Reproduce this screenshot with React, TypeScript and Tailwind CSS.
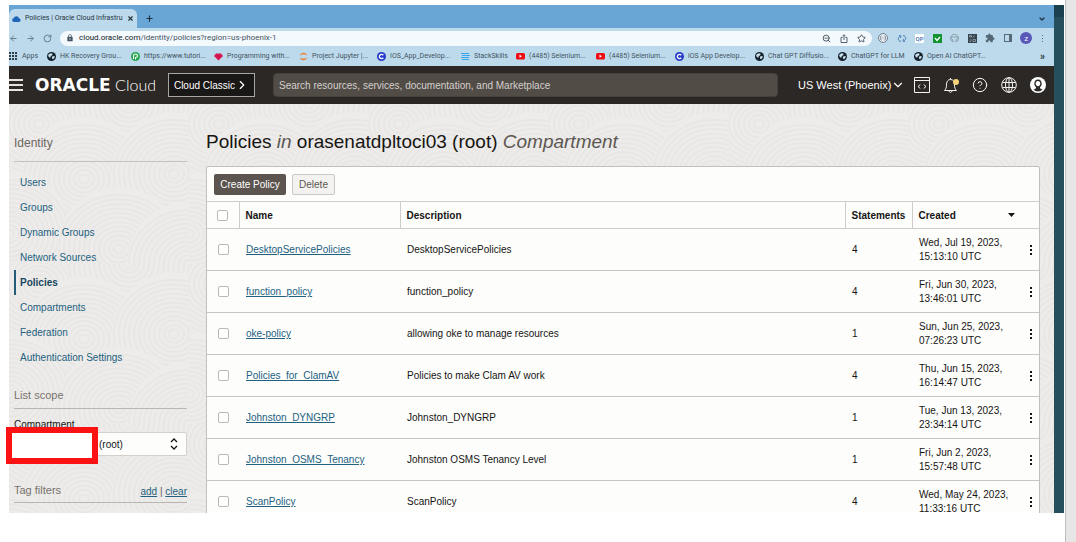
import type { ReactNode } from "react";
import {
  ArrowLeft,
  ArrowRight,
  ChevronDown,
  ChevronRight,
  CircleHelp,
  Globe,
  Plus,
  RotateCw,
  Star,
  X,
  ZoomOut,
} from "lucide-react";
import { MdExtension, MdLock } from "react-icons/md";

function Swirls() {
  const radii = [5, 10, 15, 20, 25, 30, 35, 40, 45, 50, 55, 60];
  const centers = [
    [30, 20], [120, 0], [75, 75], [165, 70], [0, 130], [110, 145], [180, 160],
  ];
  return (
    <svg aria-hidden="true" className="absolute inset-0 h-full w-full">
      <defs>
        <pattern id="swirls" width="180" height="160" patternUnits="userSpaceOnUse">
          {centers.map(([x, y], i) => (
            <g key={i} stroke="#e9e7e5" strokeWidth="2">
              <circle cx={x} cy={y} r="62" fill="#eeecea" stroke="none" />
              {radii.map((r) => (
                <ellipse key={r} cx={x} cy={y} rx={r} ry={r * 0.9} fill="none" />
              ))}
            </g>
          ))}
        </pattern>
      </defs>
      <rect width="100%" height="100%" fill="url(#swirls)" />
    </svg>
  );
}

const globe = (
  <svg viewBox="0 0 16 16" className="size-[9px]">
    <circle cx="8" cy="8" r="8" fill="#15202b" />
    <path d="M3 4l4-2 3 1-1 3-3 1 1 2-2 1-3-3zM9 8l4-1 1 2-3 4-2-1z" fill="#c9e1ef" />
  </svg>
);
const youtube = (
  <svg viewBox="0 0 18 13" className="w-[9px]">
    <rect width="18" height="13" rx="3" fill="#f00e14" />
    <path d="M7 3.5v6l5-3z" fill="#fff" />
  </svg>
);
const course = (
  <svg viewBox="0 0 18 18" className="size-[9px]">
    <circle cx="9" cy="9" r="9" fill="#263bc9" />
    <path d="M12.5 6.500a4.300 4.300 0 1 0 0 5" fill="none" stroke="#fff" strokeWidth="2.600" />
  </svg>
);

const bookmarks: { icon: ReactNode; label: string }[] = [
  {
    icon: (
      <svg viewBox="0 0 9 9" className="size-[9px]" fill="#2c3e4b">
        {[0, 3, 6].map((x) => [0, 3, 6].map((y) => <rect key={`${x}-${y}`} x={x} y={y} width="2" height="2" />))}
      </svg>
    ),
    label: "Apps",
  },
  { icon: globe, label: "HK Recovery Grou..." },
  {
    icon: (
      <svg viewBox="0 0 18 18" className="size-[9px]">
        <circle cx="9" cy="9" r="9" fill="#25a651" />
        <path d="M5 14V8a4 4 0 0 1 8 0c0 3-2 3-4 3" fill="none" stroke="#fff" strokeWidth="2.200" />
        <path d="M9 10v5" stroke="#fff" strokeWidth="2" />
      </svg>
    ),
    label: "https://www.tutori...",
  },
  {
    icon: (
      <svg viewBox="0 0 18 16" className="w-[9px]">
        <path d="M4 1h10l4 5-9 9L0 6z" fill="#d8174f" />
        <path d="M6 4l3 4 3-4" fill="none" stroke="#b00f3f" />
      </svg>
    ),
    label: "Programming with...",
  },
  {
    icon: (
      <svg viewBox="0 0 18 20" className="size-[9px]" fill="#ef7b2c">
        <path d="M1 8a8.300 8.300 0 0 1 16 0C12 4 6 4 1 8zM1 12a8.300 8.300 0 0 0 16 0c-5 4-11 4-16 0z" />
      </svg>
    ),
    label: "Project Jupyter |...",
  },
  { icon: course, label: "IOS_App_Develop..." },
  {
    icon: (
      <svg viewBox="0 0 9 8" className="h-2 w-[9px]" fill="#35a6ea">
        <path d="M0 0h8v1H0zM1 2h8v1H1zM0 4h8v1H0zM1 6h7v1H1z" />
      </svg>
    ),
    label: "StackSkills",
  },
  { icon: youtube, label: "(4485) Selenium..." },
  { icon: youtube, label: "(4485) Selenium..." },
  { icon: course, label: "iOS App Develop..." },
  { icon: globe, label: "Chat GPT Diffusio..." },
  { icon: globe, label: "ChatGPT for LLM" },
  { icon: globe, label: "Open AI ChatGPT..." },
];

function IconButton({ label, children }: { label: string; children: ReactNode }) {
  return (
    <button type="button" aria-label={label} className="flex shrink-0 items-center justify-center">
      {children}
    </button>
  );
}

function BrowserChrome() {
  return (
    <div className="font-['Roboto',sans-serif] text-[#44535f]">
      <div className="flex h-[23px] items-end bg-[#69a6d6]">
        <div className="flex h-[19px] w-32 items-center gap-1 rounded-t-md bg-[#bcdaec] pr-[5px] pl-[3px] text-[7px] text-[#26343f]">
          <svg viewBox="0 0 18 12" className="w-[9px] shrink-0" fill="#2064b8">
            <path d="M4 12a4 4 0 0 1-.5-7.900A5.500 5.500 0 0 1 14 4.500 3.800 3.800 0 0 1 14 12z" />
          </svg>
          <span className="flex-1 whitespace-nowrap">Policies | Oracle Cloud Infrastru</span>
          <IconButton label="Close tab"><X className="size-[7px]" strokeWidth={4} /></IconButton>
        </div>
        <div className="flex h-[19px] flex-1 items-center justify-between px-2 text-[#20323f]">
          <IconButton label="New tab"><Plus className="size-[9px]" strokeWidth={3} /></IconButton>
          <IconButton label="Search tabs"><ChevronDown className="size-2" strokeWidth={4} /></IconButton>
        </div>
      </div>
      <div className="flex h-5 items-center bg-[#bcdaec]">
        <div className="flex w-[51px] items-center gap-2 text-[#637986]">
          <IconButton label="Back"><ArrowLeft className="size-[9px]" strokeWidth={2.500} /></IconButton>
          <IconButton label="Forward"><ArrowRight className="size-[9px]" strokeWidth={2.500} /></IconButton>
          <IconButton label="Reload"><RotateCw className="size-[9px]" strokeWidth={2.500} /></IconButton>
        </div>
        <div className="flex h-[15px] flex-1 items-center rounded-full bg-[#f4f9fd] pr-[6px] pl-[6px]">
          <MdLock className="size-2 shrink-0" />
          <div className="ml-[5px] flex-1 text-[8px] whitespace-nowrap">
            <span className="text-[#111a20]">cloud.oracle.com</span>/identity/policies?region=us-phoenix-1
          </div>
          <div className="flex items-center gap-[9px]">
            <IconButton label="Zoom"><ZoomOut className="size-[9px]" strokeWidth={2.500} /></IconButton>
            <IconButton label="Share">
              <svg viewBox="0 0 16 18" className="h-[9px] w-2" fill="none" stroke="#44535f" strokeWidth="1.800">
                <path d="M5 7H2v10h12V7h-3M8 12V2M5 4.500L8 1.500l3 3" />
              </svg>
            </IconButton>
            <IconButton label="Bookmark"><Star className="size-[9px]" strokeWidth={2.500} /></IconButton>
          </div>
        </div>
        <div className="flex w-[182px] items-center justify-between pr-[10px] pl-[6px]">
          <IconButton label="Code extension">
            <svg viewBox="0 0 18 18" className="size-[10px]" fill="none" stroke="#52616d" strokeWidth="1.400">
              <circle cx="9" cy="9" r="8" fill="#e8eff3" />
              <path d="M6 5c-2 0 0 3-2 4 2 1 0 4 2 4M12 5c2 0 0 3 2 4-2 1 0 4-2 4M8 9h2" />
            </svg>
          </IconButton>
          <IconButton label="Sync extension">
            <svg viewBox="0 0 20 18" className="h-[9px] w-[10px]" fill="none" stroke="#4f80b4" strokeWidth="2">
              <path d="M8 15C1 14 1 6 7 4M4 3l4 1-1 4M12 3c7 1 7 9 1 11M16 15l-4-1 1-4" />
            </svg>
          </IconButton>
          <button type="button" className="flex size-[9px] items-center justify-center bg-white text-[6px] font-medium text-[#386cae]">QP</button>
          <IconButton label="Checker">
            <svg viewBox="0 0 18 18" className="size-[9px]">
              <rect width="18" height="18" fill="#13932f" />
              <path d="M4 8l4 5 6-7" fill="none" stroke="#fff" strokeWidth="2.500" />
            </svg>
          </IconButton>
          <IconButton label="Repository extension">
            <svg viewBox="0 0 18 18" className="size-[9px]" fill="none" stroke="#8c9daa" strokeWidth="2">
              <path d="M6 16a8 8 0 1 1 6 0v-4c4-1 3-5 2-7l-3 1H7L4 5c-1 2-2 6 2 7z" />
            </svg>
          </IconButton>
          <IconButton label="Picture extension">
            <svg viewBox="0 0 18 18" className="size-[9px]">
              <rect width="18" height="18" fill="#35444d" />
              <path d="M3 3h4v3H3zM9 7l5-4M3 12h5M3 15h3M10 11h5v4h-5z" fill="none" stroke="#afbcc2" strokeWidth="1.300" />
            </svg>
          </IconButton>
          <IconButton label="Extensions"><MdExtension className="size-[10px] text-[#536774]" /></IconButton>
          <IconButton label="Side panel">
            <svg viewBox="0 0 8 8" className="size-2" fill="#586a77">
              <path fillRule="evenodd" d="M0 0h8v8H0zM1 1v6h4V1z" />
            </svg>
          </IconButton>
          <button type="button" aria-label="Profile" className="flex size-3 items-center justify-center rounded-full bg-[#5957b8] text-[6px] text-white">Z</button>
          <IconButton label="Menu">
            <svg viewBox="0 0 3 9" className="h-[9px] w-[3px]" fill="#586a77">
              <rect x="1" y="1" width="1" height="1" /><rect x="1" y="4" width="1" height="1" /><rect x="1" y="7" width="1" height="1" />
            </svg>
          </IconButton>
        </div>
      </div>
      <nav aria-label="Bookmarks" className="grid h-[18px] grid-cols-[38px_84px_83px_85px_78px_84px_55px_80px_79px_80px_83px_76px_1fr_auto] items-center bg-[#bcdaec] pr-[9px] pb-px text-[7px]">
        {bookmarks.map(({ icon, label }, i) => (
          <a key={i} href="#" className="flex items-center gap-1 whitespace-nowrap">
            <span className="flex w-[9px] shrink-0 justify-center">{icon}</span>
            {label}
          </a>
        ))}
        <button type="button" aria-label="More bookmarks" className="text-[10px] leading-none font-bold text-[#26343f]">»</button>
      </nav>
    </div>
  );
}

function ConsoleHeader() {
  return (
    <header className="flex h-[38px] items-center bg-[#2c2825] text-white">
      <button type="button" aria-label="Open navigation" className="mr-3 flex w-[14px] flex-col gap-[3px]">
        <span className="h-[2px] bg-[#e5e2df]" />
        <span className="h-[2px] bg-[#e5e2df]" />
        <span className="h-[2px] bg-[#e5e2df]" />
      </button>
      <a href="#" className="mr-3 flex w-[121px] items-center justify-between whitespace-nowrap">
        <span className="font-['DejaVu_Sans',sans-serif] text-[17px] leading-5 font-bold">ORACLE</span>
        <span className="font-['Lato',sans-serif] text-[16px] leading-5 font-light">Cloud</span>
      </a>
      <button type="button" className="flex h-6 w-[87px] items-center justify-center border border-[#a9a5a1] bg-[#1a1816] text-[10px] whitespace-nowrap">
        Cloud Classic
        <ChevronRight className="size-[14px]" />
      </button>
      <input
        type="search"
        aria-label="Search"
        placeholder="Search resources, services, documentation, and Marketplace"
        className="ml-[18px] h-6 min-w-0 flex-1 rounded-sm border border-[#47413d] bg-[#524c47] px-[5px] text-[10px] placeholder:text-[#d3d0cd]"
      />
      <button type="button" className="ml-5 flex w-[103px] items-center text-[11px] whitespace-nowrap">
        US West (Phoenix)
        <ChevronDown className="size-[14px] shrink-0" />
      </button>
      <div className="ml-[13px] flex items-center gap-[13px] pr-2">
        <IconButton label="Developer tools">
          <svg viewBox="0 0 16 16" className="size-4" fill="none" stroke="#f5f3f1">
            <path d="M.5.5h15v15H.5zM.5 3.500h15M6.300 7.500L4 9.500l2.300 2M9.700 7.500l2.300 2-2.300 2" />
          </svg>
        </IconButton>
        <button type="button" aria-label="Announcements" className="relative">
          <svg viewBox="0 0 16 16" className="size-4" fill="none" stroke="#f5f3f1">
            <path d="M1.500 13.500h12c-1.500-1.500-2-3-2-5.500 0-3-1-5.500-4-5.500S3.500 5 3.500 8c0 2.500-.5 4-2 5.500zM7.500 2.500V1M6 13.500c0 2.500 3 2.500 3 0" />
          </svg>
          <span className="absolute top-[2px] right-0 size-[6px] rounded-full bg-[#f6d27a]" />
        </button>
        <IconButton label="Help"><CircleHelp className="size-4" strokeWidth={1.500} /></IconButton>
        <IconButton label="Language">
          <svg viewBox="0 0 16 16" className="size-4" fill="none" stroke="#f5f3f1">
            <circle cx="8" cy="8" r="7.300" />
            <ellipse cx="8" cy="8" rx="3.500" ry="7.300" />
            <path d="M8 .7v14.600M1.500 5.500h13M1.500 10.500h13" />
          </svg>
        </IconButton>
        <IconButton label="Account">
          <svg viewBox="0 0 16 16" className="size-4">
            <circle cx="8" cy="8" r="8" fill="#fff" />
            <path d="M8 2.500c-2.500 0-3.700 1.800-3.700 4 0 1.700.7 3 1.700 3.700v1.100l-2.500 1.400a6.700 6.700 0 0 0 9 0L10 11.300v-1.100c1-.7 1.700-2 1.700-3.700 0-2.200-1.200-4-3.700-4z" fill="#2c2825" />
            <path d="M8 4c-1.500 0-2.300 1.100-2.300 2.500S6.700 9.300 8 9.300s2.300-1.400 2.300-2.800S9.500 4 8 4z" fill="#fff" />
          </svg>
        </IconButton>
      </div>
    </header>
  );
}

const sections = ["Users", "Groups", "Dynamic Groups", "Network Sources", "Policies", "Compartments", "Federation", "Authentication Settings"];

function Sidebar() {
  return (
    <aside className="relative w-[178px] shrink-0 pl-[5px]">
      <h2 className="mt-[30px] border-b border-[#c5c1bd] pb-[9px] text-[12px] leading-[18px] text-[#6c6761]">Identity</h2>
      <nav aria-label="Identity" className="mt-2 flex flex-col">
        {sections.map((name) => (
          <a
            key={name}
            href="#"
            className={
              name === "Policies"
                ? "flex h-[25px] items-center border-l-2 border-[#235b78] pl-1 text-[10px] font-bold text-[#17465f]"
                : "flex h-[25px] items-center pl-[6px] text-[10px] text-[#22617f]"
            }
          >
            {name}
          </a>
        ))}
      </nav>
      <h2 className="mt-4 border-b border-[#b9b5b1] pb-1 text-[11px] leading-[18px] text-[#77726c]">List scope</h2>
      <label htmlFor="compartment" className="mt-2 block text-[10px] leading-[15px] text-[#161513]">Compartment</label>
      <div className="relative">
        <select id="compartment" className="block h-6 w-full appearance-none rounded-xs border border-[#d3d0cd] bg-[#fdfdfc] pl-[84px] text-[10px] text-[#161513]">
          <option>(root)</option>
        </select>
        <svg viewBox="0 0 8 12" className="pointer-events-none absolute top-[6px] right-[9px] h-3 w-2" fill="none" stroke="#161513" strokeWidth="1.300">
          <path d="M1 4l3-3 3 3M1 8l3 3 3-3" />
        </svg>
        <div className="absolute -top-[5px] -left-2 h-[37px] w-[92px] border-6 border-[#fb1313] bg-white" />
      </div>
      <div className="mt-6 flex items-center justify-between border-b border-[#b9b5b1] pb-[3px]">
        <h2 className="text-[11px] leading-[18px] text-[#77726c]">Tag filters</h2>
        <div className="pt-1 text-[10px] leading-[15px] text-[#5c5752]">
          <a href="#" className="text-[#22617f] underline">add</a> | <a href="#" className="text-[#22617f] underline">clear</a>
        </div>
      </div>
    </aside>
  );
}

const policies = [
  { name: "DesktopServicePolicies", description: "DesktopServicePolicies", statements: 4, date: "Wed, Jul 19, 2023,", time: "15:13:10 UTC" },
  { name: "function_policy", description: "function_policy", statements: 4, date: "Fri, Jun 30, 2023,", time: "13:46:01 UTC" },
  { name: "oke-policy", description: "allowing oke to manage resources", statements: 1, date: "Sun, Jun 25, 2023,", time: "07:26:23 UTC" },
  { name: "Policies_for_ClamAV", description: "Policies to make Clam AV work", statements: 4, date: "Thu, Jun 15, 2023,", time: "16:14:47 UTC" },
  { name: "Johnston_DYNGRP", description: "Johnston_DYNGRP", statements: 1, date: "Tue, Jun 13, 2023,", time: "23:34:14 UTC" },
  { name: "Johnston_OSMS_Tenancy", description: "Johnston OSMS Tenancy Level", statements: 1, date: "Fri, Jun 2, 2023,", time: "15:57:48 UTC" },
  { name: "ScanPolicy", description: "ScanPolicy", statements: 4, date: "Wed, May 24, 2023,", time: "11:33:16 UTC" },
];

function Check({ label }: { label: string }) {
  return <input type="checkbox" aria-label={label} className="mx-auto block size-[11px] appearance-none rounded-xs border border-[#bcb8b4] bg-white checked:bg-[#22617f]" />;
}

function PolicyTable() {
  return (
    <div className="rounded-t-xs border border-[#c3bfbb] bg-[#fdfdfc] text-[10px] text-[#161513]">
      <div className="flex h-[34px] items-center gap-[6px] pl-[7px]">
        <button type="button" className="h-[21px] w-[72px] rounded-xs bg-[#5b544f] text-white">Create Policy</button>
        <button type="button" className="h-[21px] w-[43px] rounded-xs border border-[#cbc7c3] bg-[#f3f2f0] text-[#5c5752]">Delete</button>
      </div>
      <table className="w-full table-fixed border-collapse text-left">
        <thead>
          <tr className="h-[27px] border-y border-[#cfccc9]">
            <th className="w-8"><Check label="Select all policies" /></th>
            <th className="w-[161px] border-l border-[#cfccc9] pl-[6px]">Name</th>
            <th className="border-l border-[#cfccc9] pl-[6px]">Description</th>
            <th className="w-[67px] border-l border-[#cfccc9] pl-[6px]">Statements</th>
            <th className="w-[110px] border-l border-[#cfccc9] pl-[6px]">
              <button type="button" className="flex w-[96px] items-center justify-between">
                Created
                <svg viewBox="0 0 7 4" className="h-1 w-[7px]"><path d="M0 0h7L3.500 4z" fill="#161513" /></svg>
              </button>
            </th>
            <th className="w-[17px]" />
          </tr>
        </thead>
        <tbody>
          {policies.map((p) => (
            <tr key={p.name} className="h-[42px] border-b border-[#c9c5c1]">
              <td><Check label={`Select ${p.name}`} /></td>
              <td className="pl-[7px]"><a href="#" className="text-[#22617f] underline">{p.name}</a></td>
              <td className="pl-[7px]">{p.description}</td>
              <td className="pl-[7px]">{p.statements}</td>
              <td className="pl-[7px] leading-[14px]">{p.date}<br />{p.time}</td>
              <td>
                <button type="button" aria-label={`Actions for ${p.name}`} className="mx-auto block">
                  <svg viewBox="0 0 2 10" className="h-[10px] w-[2px]" fill="#161513">
                    <rect width="2" height="2" /><rect y="4" width="2" height="2" /><rect y="8" width="2" height="2" />
                  </svg>
                </button>
              </td>
            </tr>
          ))}
        </tbody>
      </table>
    </div>
  );
}

export default function App() {
  return (
    <div className="flex h-screen overflow-hidden bg-white font-['Liberation_Sans',Arial,sans-serif]">
      <div className="flex min-w-0 flex-1 pt-[5px] pb-[29px] pl-[9px]">
        <div className="flex min-w-0 flex-1 flex-col overflow-x-visible overflow-y-clip">
          <BrowserChrome />
          <ConsoleHeader />
          <div className="relative flex min-h-0 flex-1 bg-[#eeecea]">
            <Swirls />
            <Sidebar />
            <main className="relative ml-[19px] min-w-0 flex-1 pr-[14px]">
              <h1 className="mt-[26px] mb-[12px] text-[19px] leading-6 whitespace-nowrap text-[#161513]">
                Policies <em className="text-[#5c5752]">in</em> orasenatdpltoci03 (root) <em className="text-[#5c5752]">Compartment</em>
              </h1>
              <PolicyTable />
            </main>
          </div>
        </div>
        <div className="w-[10px] border-t-12 border-[#1b414e] bg-[#264f5e]" />
      </div>
      <div className="ml-px w-[11px] border-l border-[#bdbdbd] bg-[#e6e6e6]" />
    </div>
  );
}
